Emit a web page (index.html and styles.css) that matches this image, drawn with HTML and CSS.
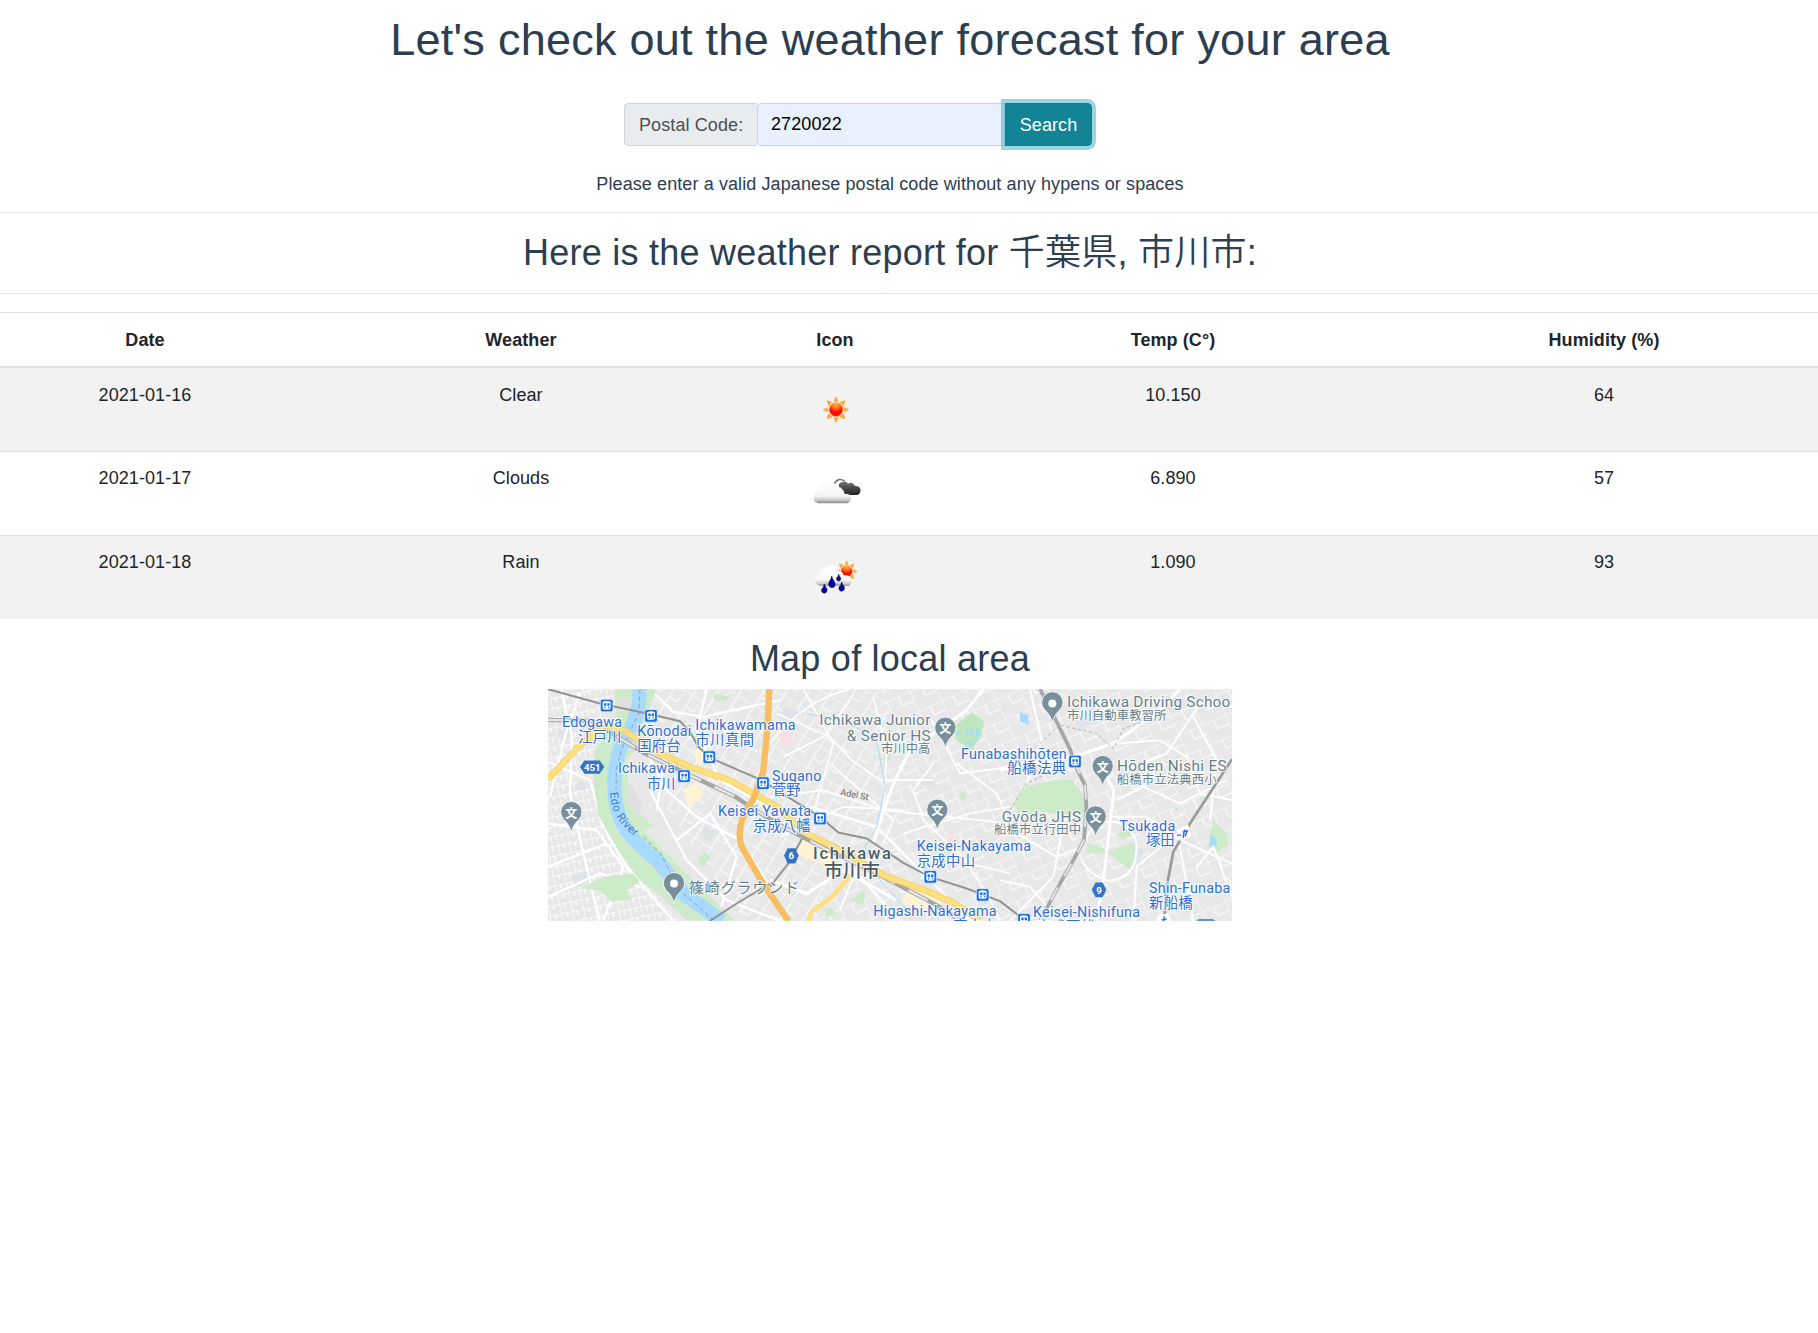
FILE: index.html
```html
<!DOCTYPE html>
<html lang="en">
<head>
<meta charset="utf-8">
<title>Weather forecast</title>
<link rel="stylesheet" href="styles.css">
</head>
<body>
<main class="page">
  <h1 class="title">Let's check out the weather forecast for your area</h1>
  <form class="search">
    <label class="search-label" for="postal">Postal Code:</label>
    <input class="search-input" id="postal" type="text" value="2720022">
    <button class="search-button" type="button">Search</button>
  </form>
  <p class="hint">Please enter a valid Japanese postal code without any hypens or spaces</p>
  <hr class="rule">
  <h2 class="report-title">Here is the weather report for <span class="place">千葉県</span>, <span class="place">市川市</span>:</h2>
  <hr class="rule">
  <table class="forecast">
    <colgroup><col class="col-date"><col class="col-weather"><col class="col-icon"><col class="col-temp"><col></colgroup>
    <thead>
      <tr><th>Date</th><th>Weather</th><th>Icon</th><th>Temp (C°)</th><th>Humidity (%)</th></tr>
    </thead>
    <tbody>
      <tr><td>2021-01-16</td><td>Clear</td><td>
        <svg class="icon" viewBox="0 0 168 168">
          <defs>
            <radialGradient id="sun" cx=".5" cy=".1" r=".75"><stop offset="0" stop-color="#ffb23c"/><stop offset=".45" stop-color="#ff6a1c"/><stop offset=".75" stop-color="#fb0d05"/><stop offset="1" stop-color="#ff1200"/></radialGradient>
            <g id="sunshape">
              <path fill="#fba63a" d="M0-39 6-25H-6ZM0 39 6 25H-6ZM-39 0-25-6V6ZM39 0 25-6V6ZM-27-27-12-22-22-12ZM27-27 12-22 22-12ZM-27 27-12 22-22 12ZM27 27 12 22 22 12Z" stroke="#fba63a" stroke-width="2"/>
              <circle r="21" fill="url(#sun)" stroke="#ffb04a" stroke-width="2.5"/>
            </g>
          </defs>
          <use href="#sunshape" x="87" y="83"/>
        </svg></td><td>10.150</td><td>64</td></tr>
      <tr><td>2021-01-17</td><td>Clouds</td><td>
        <svg class="icon" viewBox="0 0 168 168">
          <defs>
            <linearGradient id="cloud" x2="0" y2="1"><stop offset="0" stop-color="#fff"/><stop offset=".65" stop-color="#f4f4f4"/><stop offset=".86" stop-color="#c4c4c4"/><stop offset="1" stop-color="#777"/></linearGradient>
            <linearGradient id="dark" x2="0" y2="1"><stop offset="0" stop-color="#777"/><stop offset=".55" stop-color="#444"/><stop offset="1" stop-color="#222"/></linearGradient>
          </defs>
          <g transform="translate(2 6)">
            <path d="M80 50Q91 30 111 42" fill="none" stroke="#777" stroke-width="5"/>
            <path fill="url(#dark)" d="M94 60Q90 46 107 44 116 42 121 50 134 42 142 57 156 55 159 70 158 82 148 84H113Z"/>
            <path fill="url(#cloud)" stroke="#ebebeb" stroke-width="1" d="M29 107Q17 105 18 92 19 79 27 77 30 67 36 62 36 53 47 49 63 44 72 56 79 53 86 60 99 58 105 68 111 75 110 82 127 78 130 93 130 105 119 109H33Z"/>
          </g>
        </svg></td><td>6.890</td><td>57</td></tr>
      <tr><td>2021-01-18</td><td>Rain</td><td>
        <svg class="icon" viewBox="0 0 168 168">
          <defs><linearGradient id="wet" x2="0" y2="1"><stop offset="0" stop-color="#fff"/><stop offset=".72" stop-color="#f7f7f7"/><stop offset=".9" stop-color="#ccc"/><stop offset="1" stop-color="#8c8c8c"/></linearGradient></defs>
          <g transform="translate(1 -3)">
            <use href="#sunshape" transform="translate(118 70) scale(.82)"/>
            <path fill="url(#wet)" d="M36 112Q21 109 23 96 24 85 35 83 39 65 54 60 60 50 72 51 88 54 91 69 105 67 109 82 126 80 132 92 136 108 124 113H36Z"/>
            <g fill="#0004ab" stroke="#151539" stroke-width="2"><path d="M73 84Q75 93 80 99 87 110 81 116 74 122 67 116 60 110 67 99 72 93 73 84Z"/><path d="M51 108Q54 117 59 123 61 134 51 136 41 134 43 124 50 117 51 108ZM103 102Q106 111 111 117 113 128 103 130 93 128 95 118 102 111 103 102ZM94 79Q95 85 100 90 101 98 94 99 86 98 88 90 93 86 94 79Z"/></g>
          </g>
        </svg></td><td>1.090</td><td>93</td></tr>
    </tbody>
  </table>
  <h2 class="map-title">Map of local area</h2>
  <svg class="map" viewBox="0 0 2052 695">
    <defs>
      <pattern id="gridA" width="34" height="29" patternUnits="userSpaceOnUse" patternTransform="rotate(-12)"><path d="M0 0H34M0 0V29M17 0V14" fill="none" stroke="#fff" stroke-width="4"/></pattern>
      <pattern id="gridB" width="58" height="72" patternUnits="userSpaceOnUse" patternTransform="rotate(32)"><path d="M0 0H58M0 0V42M30 0V72M30 42H58" fill="none" stroke="#f8f9fa" stroke-width="4"/></pattern>
      <pattern id="gridC" width="76" height="64" patternUnits="userSpaceOnUse" patternTransform="rotate(-24)"><path d="M0 0H76M0 0V64M38 30H76M38 0V30" fill="none" stroke="#fafafa" stroke-width="4"/></pattern>
      <g id="station"><rect x="-19" y="-19" width="38" height="38" rx="6" fill="#1a73e8" stroke="#fff" stroke-width="2"/><path fill="#fff" d="M-12-11Q0-16 12-11V8L8 12H-8L-12 8Z"/><path fill="#1a73e8" d="M-8-7H-1V1H-8ZM2-7H9V1H2ZM-7 4H-3V8H-7ZM4 4H8V8H4Z"/></g>
      <g id="pin"><path d="M0 58Q-5 34-23 19A32 32 0 1 1 23 19Q5 34 0 58Z" fill="#78909c" stroke="#f3f5f6" stroke-width="3"/></g>
      <path id="river-name" d="M186 310Q190 405 290 462L330 485"/>
    </defs>
    <rect width="2052" height="695" fill="#e8e8e8"/>

    <!-- Blocks and local streets -->
    <path d="M0 0H200L140 180 150 340 220 500 390 695H0Z" fill="url(#gridA)"/>
    <path d="M300 0H1030L970 360 800 695H590L300 280Z" fill="url(#gridB)"/>
    <path d="M1000 0H2052V695H780L970 340Z" fill="url(#gridC)"/>
    <g fill="#dfe3e7"><path d="M30 120h35v28H30ZM92 270l26 12-8 22-30-8ZM70 560l44-14 10 30-40 18ZM470 410l34 20-18 28-28-22ZM710 50l44 18-20 30-38-14ZM1120 260l44 10-8 26-38-12ZM1580 90l40-20 22 28-50 22ZM1850 20l60 10-30 40-36-14ZM1760 470l30 16-18 30-28-20Z"/></g>
    <g fill="#f8dfe0"><path d="M110 265h24v20h-24ZM690 130l30-16 10 46-26 14ZM1200 435l18-10-4 40-18 6Z"/></g>
    <g fill="#fff3d6"><path d="M435 185l50-18 12 40-46 20ZM405 300l46-20 16 40-46 36ZM760 450l110 50-30 34-100-40ZM1090 590l90 50-40 35-80-40Z"/></g>

    <!-- Western streets and the river with its banks -->
    <g transform="translate(-24 -27)">
      <g fill="none" stroke="#fff" stroke-width="7"><path d="M65 27 96 170 90 340 130 520 180 722M24 245 150 300 190 440 260 560 400 722M24 430 170 450 250 560 190 722M24 560 200 490M120 40 80 150 30 350M24 650 180 580 300 620"/><path d="M330 27 400 95 490 110 720 60M300 180 380 330 470 410 600 480 690 620M330 330 440 540 560 660 720 722M380 200 350 390M500 27 470 150 540 300 720 400M410 480 510 400 590 530 530 722"/></g>
      <path fill="#cdeac9" d="M224 27H350L322 100 300 190 260 240 265 330 300 400 340 440 310 450 400 540 585 722H442L365 650 300 600 235 510 175 405 160 300 165 210 230 120ZM120 625 190 590 280 580 300 605 260 630 275 660 215 665 180 630ZM470 535 495 518 512 530 490 560ZM525 40l45 12-20 12-30-7Z"/>
      <path fill="#dfe1df" d="M230 52h44v42h-44ZM270 305l36 70-20 40-30-60Z"/>
      <path fill="none" stroke="#a8daff" stroke-width="43" d="M298 27Q302 70 282 125L236 215 225 270Q216 370 248 430 278 485 352 540 382 575 430 640L545 722"/>
      <path fill="none" stroke="#8aa0b2" stroke-width="3" stroke-dasharray="13 9" d="M300 27 296 100 245 205 229 270 228 330M310 470 362 520 395 585M430 640 520 718"/>
    </g>

    <!-- Parks and ponds -->
    <g transform="translate(666 -27)"><path fill="#bfe6bf" d="M552 140 605 97 642 123 634 170 606 208 558 180Z"/><path fill="#a8daff" d="M560 150l15 10-14 5ZM584 154l15-10-7 22ZM603 140l8 25-12 4ZM620 142l12 20-16 10ZM588 184l24 4-12 10Z"/><path fill="#cdeac9" d="M335 235l25-12 4 10-18 14ZM570 340l17-8v28l-16-4ZM265 640l22-8-7 42-38-12ZM164 688l20-5 14 18-30 10Z"/></g>
    <g transform="translate(1356 -27)"><path fill="#cdeac9" d="M40 370 80 320 160 300 215 298 240 330 258 365 250 400 200 405 120 395 60 405ZM262 488 330 512 404 485V530L391 570 327 520 262 518ZM350 460l30-20 30 10-40 30ZM640 420l42 40 3 35-34 20-28-15ZM600 350l15 4-12 6Z"/><path fill="#a8daff" d="M59 95 84 105 87 133 60 125ZM632 465 651 477 650 498 628 500ZM525 380l8 5-5 9Z"/></g>

    <!-- Larger local streets -->
    <g transform="translate(666 -27)" fill="none" stroke="#fff">
      <path stroke-width="5" d="M0 190Q100 60 240 27M20 100 180 170 245 240 330 300 490 300M40 230 160 170 240 60M100 27 190 190 130 400M180 250 270 330 370 420 340 490M310 50 350 210 340 400M490 250 430 330 460 420 600 550 720 580M560 250 680 340 720 430M30 470 220 380 400 390M0 350 160 330 340 390 720 430M480 110 570 280 720 260M400 460 600 400 720 380M570 520 650 640 690 720M210 690 270 540 390 520"/>
      <path stroke-width="9" d="M640 27 590 90 420 210 370 310 325 440 310 490M0 600 110 640 220 570 380 660"/>
      <path stroke-width="8" d="M270 590 390 722M120 380 320 440 600 720"/>
      <path stroke="#a8daff" stroke-width="3" d="M110 100 230 125 320 180 346 320 320 440 285 500 330 600 420 700"/>
    </g>
    <g transform="translate(1356 -27)" fill="none" stroke="#fff">
      <path stroke-width="9" d="M315 285 342 330 322 500 310 600 290 722M0 270 220 230 340 190 480 90 540 27"/>
      <path stroke-width="6" d="M255 485A75 75 0 0 1 408 520Q405 590 330 602 270 590 245 540M90 27 125 180 80 310M350 190 480 180 560 230 600 340 696 360M380 270 500 220 600 70 696 80M350 360 430 320 540 370 680 300M0 430 170 530 245 500M30 722 160 590 190 430M400 722 410 560 520 470 696 550M430 430 540 500 580 722M580 110 650 240 630 420M340 410 440 410 530 470M590 560 640 500 696 650M0 600 90 620 180 722"/>
      <path stroke="#aaa" stroke-width="2.5" stroke-dasharray="10 7" d="M120 190 180 135 290 160 340 205 370 145 430 125M30 390 80 310 140 280"/>
    </g>

    <!-- Railways and highways -->
    <g fill="none" stroke-linejoin="round">
      <path stroke="#929292" stroke-width="6" d="M0 0 156 43 311 76 396 96 426 128 451 173 486 206 646 275 686 303 816 383 871 430 956 448 1066 521 1146 563 1256 598 1356 636 1426 690M666 593 721 523 776 423M486 695 566 643 666 583"/>
      <path stroke="#a5a5a5" stroke-width="13" d="M0 92 130 95 285 190 430 260 560 322 690 405 830 478 1000 560 1160 645 1240 695"/>
      <path stroke="#e7e7e7" stroke-width="7" stroke-dasharray="65 45" d="M0 92 130 95 285 190 430 260 560 322 690 405 830 478 1000 560 1160 645 1240 695"/>
      <g transform="translate(1356 -27)"><path stroke="#a5a5a5" stroke-width="11" d="M120 27 165 115 210 207 230 265 255 315 259 380 252 480 220 540 180 610 120 722"/><path stroke="#e7e7e7" stroke-width="6" stroke-dasharray="44 38" d="M220 240 255 315 259 380 252 480 220 540 180 610 120 722"/><path stroke="#999" stroke-width="8" d="M696 237 570 430 520 515 500 620 493 722"/></g>
      <path stroke="#f4cf62" stroke-width="19" d="M0 270 85 180 165 108 230 125 330 190 430 235 550 275 690 355 770 430 900 495 1010 560 1130 603 1215 640 1300 695"/>
      <path stroke="#fee17d" stroke-width="14" d="M0 270 85 180 165 108 230 125 330 190 430 235 550 275 690 355 770 430 900 495 1010 560 1130 603 1215 640 1300 695"/>
      <path stroke="#fee17d" stroke-width="13" d="M910 555 850 625 790 669 782 695"/>
      <path stroke="#f7bd60" stroke-width="19" d="M664 0 658 120 646 245 617 328Q560 405 580 470L640 575 690 650 722 695"/>
    </g>

    <!-- Route shields -->
    <g class="shield"><path fill="#3374c5" d="M96 233 109 214H155L169 233 155 254H109Z"/><text x="133" y="245" text-anchor="middle">451</text>
      <path fill="#3374c5" d="M708 499 719 477H742L752 499 742 523H719Z"/><text x="730" y="510" text-anchor="middle">6</text>
      <path fill="#3374c5" d="M1631 602 1643 580H1664L1675 602 1664 624H1643Z"/><text x="1653" y="614" text-anchor="middle">9</text></g>

    <!-- Station markers -->
    <use href="#station" x="176" y="49"/><use href="#station" x="309" y="80"/><use href="#station" x="484" y="204"/><use href="#station" x="408" y="261"/><use href="#station" x="645" y="282"/><use href="#station" x="816" y="388"/><use href="#station" x="1147" y="563"/><use href="#station" x="1304" y="617"/><use href="#station" x="1581" y="217"/><use href="#station" x="1428" y="692"/>
    <g fill="#fff"><path d="M1886 425 1920 406 1930 442 1896 456ZM1826 680 1860 672 1870 695H1826Z"/><path fill="none" stroke="#2d6ad0" stroke-width="4" d="M1888 438h12M1910 421l-5 26M1904 429l14-4-7 17M1841 692l16-3M1849 681l-2 14"/></g>
    <path fill="#3374c5" d="M1945 695 1952 690H1995L2002 695Z"/>

    <!-- Place pins -->
    <g class="pins"><use href="#pin" x="70" y="372"/><use href="#pin" x="378" y="585"/><use href="#pin" x="1192" y="119"/><use href="#pin" x="1168" y="365"/><use href="#pin" x="1513" y="43"/><use href="#pin" x="1664" y="234"/><use href="#pin" x="1643" y="385"/>
      <circle cx="378" cy="583" r="12" fill="#fff"/><circle cx="1513" cy="43" r="12" fill="#fff"/>
      <text x="70" y="386">文</text><text x="1192" y="132">文</text><text x="1168" y="379">文</text><text x="1664" y="248">文</text><text x="1643" y="399">文</text></g>

    <!-- Labels -->
    <g class="label station-label">
      <text x="42" y="113" textLength="180">Edogawa</text><text x="90" y="158" textLength="130">江戸川</text>
      <text x="268" y="142" textLength="162">Kōnodai</text><text x="268" y="187" textLength="130">国府台</text>
      <text x="442" y="123" textLength="301">Ichikawamama</text><text x="442" y="168" textLength="176">市川真間</text>
      <text x="210" y="252" textLength="171">Ichikawa</text><text x="296" y="299" textLength="86">市川</text>
      <text x="672" y="275" textLength="148">Sugano</text><text x="672" y="318" textLength="86">菅野</text>
      <text x="510" y="380" textLength="279">Keisei Yawata</text><text x="614" y="425" textLength="174">京成八幡</text>
      <text x="1106" y="487" textLength="343">Keisei-Nakayama</text><text x="1106" y="530" textLength="175">京成中山</text>
      <text x="976" y="681" textLength="370">Higashi-Nakayama</text><text x="1216" y="726" textLength="130">東中山</text>
      <text x="1239" y="210" textLength="317">Funabashihōten</text><text x="1378" y="253" textLength="176">船橋法典</text>
      <text x="1714" y="425" textLength="168">Tsukada</text><text x="1794" y="468" textLength="86">塚田</text>
      <text x="1803" y="613" textLength="244">Shin-Funaba</text><text x="1803" y="658" textLength="131">新船橋</text>
      <text x="1455" y="685" textLength="321">Keisei-Nishifuna</text><text x="1466" y="728" textLength="175">京成西船</text>
    </g>
    <g class="label place-label">
      <text x="814" y="109" textLength="333">Ichikawa Junior</text><text x="896" y="157" textLength="252">&amp; Senior HS</text><text class="small" x="999" y="193" textLength="148">市川中高</text>
      <text x="1557" y="55" textLength="490">Ichikawa Driving Schoo</text><text class="small" x="1557" y="94" textLength="298">市川自動車教習所</text>
      <text x="1707" y="245" textLength="329">Hōden Nishi ES</text><text class="small" x="1706" y="286" textLength="300">船橋市立法典西小</text>
      <text x="1361" y="399" textLength="238">Gvōda JHS</text><text class="small" x="1338" y="436" textLength="261">船橋市立行田中</text>
      <text x="422" y="613" textLength="332">篠崎グラウンド</text>
    </g>
    <g class="label city-label"><text x="795" y="509" textLength="234">Ichikawa</text><text class="city-native" x="828" y="565" textLength="168">市川市</text></g>
    <text class="street-label" x="876" y="317" transform="rotate(11 876 317)">Adel St</text>
    <text class="river-label"><textPath href="#river-name">Edo River</textPath></text>
  </svg>
</main>
</body>
</html>
```
FILE: styles.css
```css
html { font-size: 18px; }
*, *::before, *::after { box-sizing: border-box; }
body {
  margin: 0;
  overflow: hidden;
  background: #fff;
  color: #2c3e50;
  font-family: "Liberation Sans", Arial, "Noto Sans CJK JP", sans-serif;
  line-height: 1.5;
}
.page {
  width: 1856px;
  margin-left: -38px;
  padding-top: 13px;
  text-align: center;
}
.title, .report-title, .map-title { margin: 0; font-weight: 400; line-height: 1.2; }
.title { font-size: 45px; letter-spacing: .26px; }
.report-title, .map-title { height: 43px; font-size: 36px; letter-spacing: .24px; }
.place { font-family: "Noto Sans CJK JP", sans-serif; font-weight: 350; line-height: 1; }
.search {
  display: flex;
  width: 468px;
  height: 43px;
  margin: 36px 0 0 662px;
}
.search-label {
  display: flex;
  align-items: center;
  width: 133px;
  padding: 1px 0 0 14px;
  border: 1px solid #ced4da;
  border-right: 0;
  border-radius: 4.5px 0 0 4.5px;
  background: #e9ecef;
  color: #495057;
  letter-spacing: .1px;
}
.search-input {
  width: 248px;
  min-width: 0;
  padding: 0 13px 1px;
  border: 1px solid #ced4da;
  border-radius: 4px 0 0 4px;
  background: #e8f0fe;
  color: #000;
  font: inherit;
  letter-spacing: .1px;
}
.search-button {
  flex: 1;
  padding: 1px 0 0;
  border: 1px solid #117a8b;
  border-radius: 0 4.5px 4.5px 0;
  background: #138496;
  box-shadow: 0 0 0 4px rgba(58, 176, 195, .5);
  color: #fff;
  font: inherit;
  letter-spacing: .1px;
}
.hint { margin: 25px 0 0; letter-spacing: .1px; }
.rule { margin: 14px 0 18px; border: 0; border-top: 1px solid rgba(0, 0, 0, .1); }
.report-title + .rule { margin-top: 19px; }
.forecast {
  width: 100%;
  border-collapse: collapse;
  table-layout: fixed;
  color: #212529;
  letter-spacing: .08px;
}
.col-date { width: 366px; }
.col-weather { width: 386px; }
.col-icon { width: 242px; }
.col-temp { width: 434px; }
.forecast th {
  height: 54.5px;
  padding: 1px 0 0;
  border-top: 1px solid #dee2e6;
  border-bottom: 2px solid #dee2e6;
}
.forecast td {
  height: 84px;
  padding: 13.5px 0 0;
  border-top: 1px solid #dee2e6;
  vertical-align: top;
}
.forecast tbody tr:nth-child(odd) { background: #f2f2f2; }
.icon { display: block; width: 56px; height: 56px; margin: 0 auto; }
.map-title { margin-top: 18px; }
.map { display: block; width: 684px; height: 232px; margin: 9px 0 0 586px; overflow: hidden; }
.map text { font-family: Roboto, "Noto Sans CJK JP", sans-serif; letter-spacing: 0; }
.label text { paint-order: stroke; stroke: #fff; stroke-width: 6px; stroke-linejoin: round; stroke-opacity: .85; }
.station-label { fill: #2f6fd0; font-size: 43px; }
.place-label { fill: #667f8b; font-size: 46px; }
.place-label .small { font-size: 37px; }
.city-label { fill: #4c5a68; font-size: 50px; font-weight: 500; }
.city-label .city-native { font-size: 56px; }
.shield text { fill: #fff; font-size: 29px; font-weight: 700; }
.pins text { fill: #fff; font-size: 36px; font-weight: 700; text-anchor: middle; }
.street-label { fill: #666; font-size: 27px; }
.map .river-label { fill: #4380c5; font-size: 34px; letter-spacing: 2px; }
```
